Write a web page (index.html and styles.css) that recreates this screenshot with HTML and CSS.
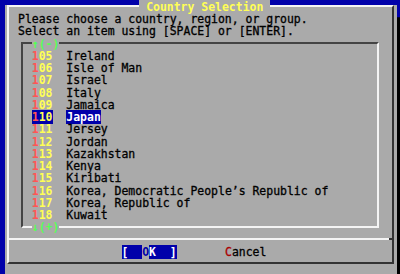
FILE: index.html
```html
<!DOCTYPE html>
<html lang="en">
<head>
    <meta charset="UTF-8">
    <meta name="viewport" content="width=device-width, initial-scale=1.0">
    <title>Country Selection</title>
    <link rel="stylesheet" href="styles.css">
</head>
<body>

<div class="dialog">
    <div class="frame">
        <div class="title"> Country Selection </div>
        <p class="row">Please choose a country, region, or group.</p>
        <p class="row">Select an item using [SPACE] or [ENTER].</p>

        <div class="list">
            <div class="more">↑(-)</div>
            <ul class="items">
                <li class="row"><span class="tag"><b>1</b>05</span>  <span class="name">Ireland</span></li>
                <li class="row"><span class="tag"><b>1</b>06</span>  <span class="name">Isle of Man</span></li>
                <li class="row"><span class="tag"><b>1</b>07</span>  <span class="name">Israel</span></li>
                <li class="row"><span class="tag"><b>1</b>08</span>  <span class="name">Italy</span></li>
                <li class="row"><span class="tag"><b>1</b>09</span>  <span class="name">Jamaica</span></li>
                <li class="row selected"><span class="tag"><b>1</b>10</span>  <span class="name">Japan</span></li>
                <li class="row"><span class="tag"><b>1</b>11</span>  <span class="name">Jersey</span></li>
                <li class="row"><span class="tag"><b>1</b>12</span>  <span class="name">Jordan</span></li>
                <li class="row"><span class="tag"><b>1</b>13</span>  <span class="name">Kazakhstan</span></li>
                <li class="row"><span class="tag"><b>1</b>14</span>  <span class="name">Kenya</span></li>
                <li class="row"><span class="tag"><b>1</b>15</span>  <span class="name">Kiribati</span></li>
                <li class="row"><span class="tag"><b>1</b>16</span>  <span class="name">Korea, Democratic People’s Republic of</span></li>
                <li class="row"><span class="tag"><b>1</b>17</span>  <span class="name">Korea, Republic of</span></li>
                <li class="row"><span class="tag"><b>1</b>18</span>  <span class="name">Kuwait</span></li>
            </ul>
            <div class="more bottom">↓(+)</div>
        </div>

        <div class="sep"></div>

        <div class="row buttons"><span class="btn active">[  <span class="cursor">O</span>K  ]</span>       <span class="btn"><b>C</b>ancel</span></div>
    </div>
</div>

</body>
</html>
```

FILE: styles.css
```css
* { margin: 0; padding: 0; box-sizing: border-box; }
body {
    width: 400px;
    height: 274px;
    overflow: hidden;
    background-color: #0000aa;
    font-family: 'DejaVu Sans Mono', monospace;
    font-size: 11.46px;
    line-height: 12.25px;
    color: #000;
    -webkit-text-stroke: 0.3px currentColor; /* thicker strokes, like the VGA font */
}

/* Dialog box + shadow */
.dialog {
    margin-left: 5px;
    width: 391.5px;
    height: 269.5px;
    background-color: #aaaaaa;
    box-shadow: 13.5px 12.25px 0 #000;
}
.frame {
    margin: 5.125px 0 0 2px;
    width: 386.5px;
    height: 259.25px;
    padding-left: 9px;
    border-top: 2px solid #f4f4f4;
    border-left: 2px solid #f4f4f4;
    border-right: 2px solid #333;
    border-bottom: 2px solid #333;
}
/* one text line of the character grid, baseline nudged down a bit */
.row { white-space: pre; height: 12.25px; padding-top: 0.9px; }

.title {
    display: table;
    padding-top: 0.9px;
    margin: -7.125px auto -0.9px;
    white-space: pre;
    font-weight: bold;
    color: #ffff55;
    background-color: #aaaaaa;
    -webkit-text-stroke: 0;
}

/* Menu list */
.list {
    margin: 5.125px 0 0 3px;
    width: 358px;
    border-top: 2px solid #444;
    border-left: 2px solid #444;
    border-right: 2px solid #f4f4f4;
    border-bottom: 2px solid #f4f4f4;
}
.more {
    display: table;
    padding-top: 0.9px;
    margin: -7.125px 0 -0.9px 8.8px;
    font-weight: bold;
    color: #55ff55;
    background-color: #aaaaaa;
    -webkit-text-stroke: 0;
}
.more.bottom { margin: 0 0 -8.025px 8.8px; }
.items { list-style: none; padding-left: 8.8px; }
.tag { color: #ffff55; font-weight: bold; -webkit-text-stroke: 0; }
.tag b { color: #ff5555; }
.selected .tag, .selected .name { background-color: #0000aa; }
.selected .name { color: #fff; font-weight: bold; -webkit-text-stroke: 0; }

/* Separator + buttons */
.sep {
    margin: 10.25px 0 0 -9px;
    height: 2px;
    background: linear-gradient(to right, #f4f4f4 calc(100% - 3px), #333 0);
}
.buttons { margin-top: 5.125px; padding-left: 103.5px; }
.btn.active { color: #fff; font-weight: bold; background-color: #0000aa; -webkit-text-stroke: 0; }
.cursor { color: #0000aa; background-color: #aaaaaa; }
.btn b { color: #aa0000; font-weight: normal; }
```
